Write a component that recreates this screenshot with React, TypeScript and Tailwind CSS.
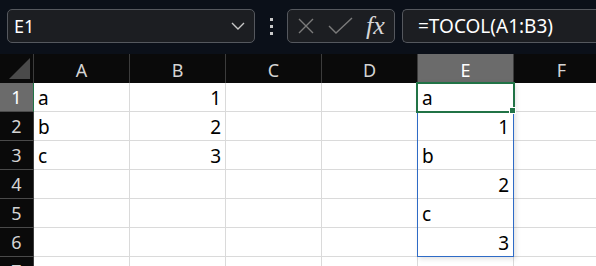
import React from "react";

const COLS = ["A", "B", "C", "D", "E", "F"];

// cell contents keyed by "col+row"
const DATA: Record<string, { v: string; num?: boolean }> = {
  A1: { v: "a" }, B1: { v: "1", num: true },
  A2: { v: "b" }, B2: { v: "2", num: true },
  A3: { v: "c" }, B3: { v: "3", num: true },
  E1: { v: "a" }, E2: { v: "1", num: true },
  E3: { v: "b" }, E4: { v: "2", num: true },
  E5: { v: "c" }, E6: { v: "3", num: true },
};

export default function App() {
  return (
    <div className="h-[266px] w-[596px] overflow-hidden bg-white font-['Noto_Sans','Open_Sans',sans-serif]">
      <FormulaBar />
      <Sheet />
    </div>
  );
}

function FormulaBar() {
  return (
    <div className="flex h-[54px] items-center bg-[#0b1019] pb-[2px]">
      <div className="ml-[7px] flex h-[34px] w-[248px] items-center justify-between rounded-[5px] border border-[#55585e] bg-[#1c1e22] pl-[6px] pr-[9px]">
        <span className="text-[18px] leading-none text-white">E1</span>
        <svg width="14" height="8" viewBox="0 0 14 8" fill="none" stroke="#c8c8c8" strokeWidth="1.4">
          <path d="M1 1l6 6 6-6" />
        </svg>
      </div>
      <div className="mx-[14px] flex w-[4px] flex-col items-center gap-[4px]">
        <span className="h-[3px] w-[3px] bg-[#c9c9c9]" />
        <span className="h-[3px] w-[3px] bg-[#c9c9c9]" />
        <span className="h-[3px] w-[3px] bg-[#c9c9c9]" />
      </div>
      <div className="flex h-[34px] w-[108px] items-center rounded-[5px] border border-[#55585e] bg-[#1c1e22] pl-[9px]">
        <svg width="18" height="18" viewBox="0 0 18 18" fill="none" stroke="#7b7b7b" strokeWidth="1.4">
          <path d="M2 2l14 14M16 2L2 16" />
        </svg>
        <svg className="ml-[13px]" width="25" height="18" viewBox="0 0 25 18" fill="none" stroke="#7b7b7b" strokeWidth="1.4">
          <path d="M1 9l7 7L24 1" />
        </svg>
        <span className="ml-[13px] font-['Liberation_Serif',serif] text-[26px] italic leading-none text-[#d6d6d6]">
          fx
        </span>
      </div>
      <div className="ml-[7px] flex h-[34px] flex-1 items-center rounded-l-[5px] border border-r-0 border-[#55585e] bg-[#1c1e22] pl-[15px]">
        <span className="text-[19px] leading-none text-white">=TOCOL(A1:B3)</span>
      </div>
    </div>
  );
}

function Sheet() {
  const rows = [1, 2, 3, 4, 5, 6, 7];
  return (
    <div className="relative">
      {/* column headers */}
      <div className="flex h-[29px] bg-[#0a0a0a]">
        <div className="relative w-[34px] shrink-0 border-r border-[#3c3c3c]">
          <svg className="absolute left-[9px] top-[4px]" width="22" height="21" viewBox="0 0 22 21">
            <polygon points="0,21 21,21 21,0" fill="#4a4a4a" />
          </svg>
        </div>
        {COLS.map((c) => (
          <div
            key={c}
            className={`flex w-[96px] shrink-0 items-center justify-center border-r border-[#3c3c3c] pt-[3px] text-[18px] ${
              c === "E" ? "bg-[#6b6b6b] text-white" : "text-[#d4d4d4]"
            }`}
          >
            {c}
          </div>
        ))}
      </div>

      {/* rows */}
      {rows.map((r) => (
        <div key={r} className="flex h-[29px]">
          <div
            className={`flex w-[34px] shrink-0 items-center justify-center border-b border-r text-[18px] ${
              r === 1
                ? "border-b-[#4a4a4a] border-r-[#217346] bg-[#6b6b6b] text-white"
                : "border-b-[#4a4a4a] border-r-[#3c3c3c] bg-[#0a0a0a] text-[#d4d4d4]"
            }`}
          >
            {r}
          </div>
          {COLS.map((c) => {
            const cell = DATA[c + r];
            return (
              <div
                key={c}
                className={`flex w-[96px] shrink-0 items-end border-b border-r border-[#dadada] px-[4px] pb-[1px] text-[19px] leading-[24px] text-black ${
                  cell?.num ? "justify-end" : "justify-start"
                }`}
              >
                {cell?.v}
              </div>
            );
          })}
        </div>
      ))}

      {/* spill range E1:E6 */}
      <div className="pointer-events-none absolute left-[417px] top-[28px] h-[175px] w-[97px] border border-[#2e6bc6] shadow-[2px_2px_5px_rgba(0,0,0,0.12)]" />

      {/* active cell E1 */}
      <div className="pointer-events-none absolute left-[416px] top-[28px] h-[31px] w-[99px] border-2 border-[#217346]" />
      <div className="pointer-events-none absolute left-[509px] top-[53px] h-[7px] w-[7px] border border-white bg-[#217346]" />
    </div>
  );
}
